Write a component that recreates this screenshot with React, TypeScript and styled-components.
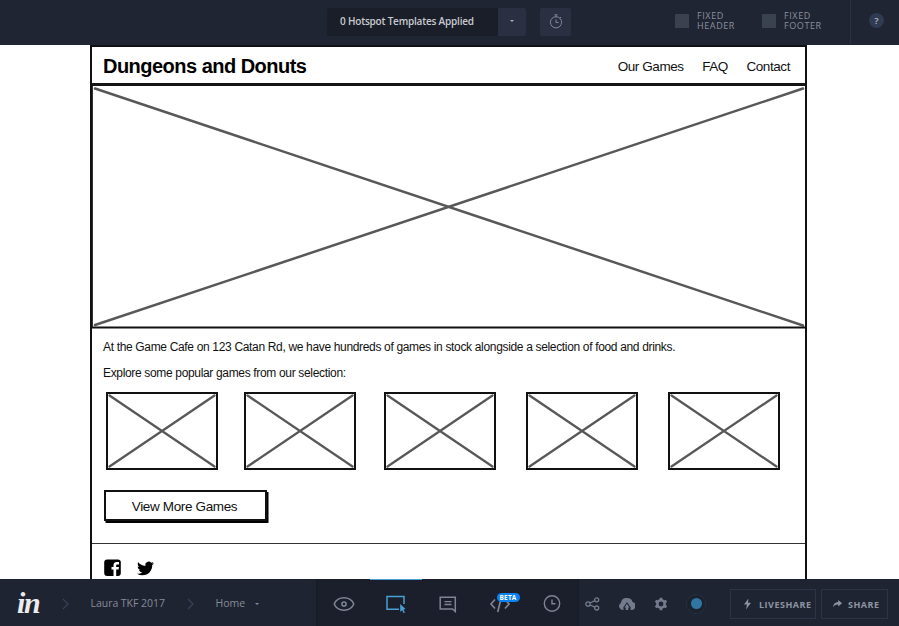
import React from "react";
import styled, { createGlobalStyle } from "styled-components";

const GlobalStyle = createGlobalStyle`
  * { box-sizing: border-box; }
  html, body { margin: 0; padding: 0; background: #fff; }
  body { overflow: hidden; }
`;

const App = styled.div`
  width: 899px;
  height: 626px;
  display: grid;
  grid-template-rows: 45px 534px 47px;
  overflow: hidden;
  background: #fff;
  font-family: "Open Sans", "Noto Sans", sans-serif;
`;

/* ---------- top toolbar ---------- */

const TopBar = styled.header`
  display: flex;
  align-items: flex-start;
  background: #1f2533;
  padding-left: 327px;
`;

const TemplateSelect = styled.div`
  display: flex;
  width: 199px;
  height: 28px;
  margin-top: 8px;
  border-radius: 2px;
  overflow: hidden;
  background: #1a1e29;
`;

const TemplateLabel = styled.span`
  width: 171px;
  padding-left: 13px;
  line-height: 27px;
  font-size: 10px;
  font-weight: 600;
  letter-spacing: -0.2px;
  color: #c9cbcf;
  white-space: nowrap;
`;

const SelectToggle = styled.div`
  width: 28px;
  display: flex;
  align-items: center;
  justify-content: center;
  padding-bottom: 2px;
  background: #2a3042;
`;

const TimerButton = styled.div`
  width: 31px;
  height: 28px;
  margin: 8px 0 0 14px;
  padding-bottom: 1px;
  display: flex;
  align-items: center;
  justify-content: center;
  border-radius: 2px;
  background: #2a3042;
`;

const FixedOption = styled.label<{ $left: number }>`
  display: flex;
  margin: 11px 0 0 ${(p) => p.$left}px;
  width: 62px;
  gap: 8px;
  font-size: 9px;
  line-height: 10px;
  letter-spacing: 0.6px;
  color: #8b909c;
`;

const CheckSquare = styled.span`
  flex: none;
  width: 14px;
  height: 14px;
  margin-top: 3px;
  background: #3a424f;
`;

const HelpArea = styled.div`
  width: 49px;
  height: 45px;
  margin-left: auto;
  padding: 13px 0 0 18px;
  border-left: 1px solid #2a3040;
`;

const HelpBadge = styled.div`
  width: 15px;
  height: 15px;
  border-radius: 50%;
  background: #303a52;
  color: #b4bac6;
  text-align: center;
  font-size: 9.5px;
  font-weight: 600;
  line-height: 15px;
`;

/* ---------- wireframe ---------- */

const Page = styled.main`
  width: 717px;
  height: 534px;
  margin-left: 90px;
  border: solid #111;
  border-width: 2px 2px 0;
  font-family: "Liberation Sans", Arial, sans-serif;
  color: #111;
  overflow: hidden;
`;

const SiteHeader = styled.div`
  height: 39px;
  display: flex;
  justify-content: space-between;
  padding: 0 15px 0 11px;
  border-bottom: 3px solid #151515;
`;

const SiteTitle = styled.h1`
  margin: 0;
  font-size: 20px;
  line-height: 39px;
  letter-spacing: -0.52px;
  color: #000;
  white-space: nowrap;
`;

const SiteNav = styled.nav`
  display: flex;
  gap: 18.5px;
  font-size: 13.5px;
  letter-spacing: -0.42px;
  line-height: 39px;
  white-space: nowrap;
`;

const CrossBox = styled.svg`
  display: block;
  flex: none;
`;

const Copy = styled.div`
  padding: 5px 0 0 11px;
  font-size: 12px;
  letter-spacing: -0.335px;
  line-height: 26px;
  white-space: nowrap;
`;

const CopyLine = styled.p`
  margin: 0;
`;

const Gallery = styled.div`
  display: grid;
  grid-template-columns: 138px 140.5px 142px 142px 112px;
  padding: 6px 0 0 13.5px;
`;

const MoreButton = styled.div`
  width: 163px;
  height: 31px;
  margin: 20px 0 0 12px;
  border: 2px solid #111;
  box-shadow: 1.5px 2px 0 #000;
  text-align: center;
  font-size: 13.5px;
  letter-spacing: -0.35px;
  line-height: 30px;
  padding-right: 2px;
`;

const SiteFooter = styled.div`
  height: 40px;
  margin-top: 22px;
  padding: 15px 0 0 12px;
  border-top: 1px solid #333;
  display: flex;
  gap: 15px;
`;

/* ---------- bottom toolbar ---------- */

const BottomBar = styled.footer`
  display: grid;
  grid-template-columns: 316px 263px 1fr;
  background: #1f2432;
  color: #868b99;
`;

const Crumbs = styled.div`
  display: flex;
  align-items: center;
  padding: 2px 0 0 17px;
  font-size: 10.5px;
  white-space: nowrap;
`;

const Crumb = styled.span<{ $width: number }>`
  width: ${(p) => p.$width}px;
  padding-bottom: 1px;
  letter-spacing: -0.04px;
`;

const CrumbArrow = styled.svg`
  flex: none;
  margin-right: 21.5px;
`;

const Logo = styled.span`
  flex: none;
  width: 45px;
  height: 36px;
  font-family: "Liberation Serif", serif;
  font-size: 30px;
  font-style: italic;
  font-weight: 700;
  line-height: 34px;
  letter-spacing: -1.4px;
  color: #ececee;
`;

const ModeTabs = styled.div`
  display: grid;
  grid-template-columns: repeat(5, 52px);
  justify-content: center;
  background: #1a1f2b;
  border: solid #171b26;
  border-width: 0 1px;
`;

const ModeTab = styled.div<{ $active?: boolean }>`
  position: relative;
  display: flex;
  align-items: center;
  justify-content: center;
  padding-top: ${(p) => (p.$active ? "1px" : "2px")};
  border-top: ${(p) => (p.$active ? "1px solid #4a9fd4" : "none")};
  color: ${(p) => (p.$active ? "#4a9fd4" : "#7f8593")};
`;

const BetaBadge = styled.span`
  position: absolute;
  left: 23px;
  top: 14px;
  width: 23px;
  height: 9px;
  border-radius: 5px;
  background: #0b82f0;
  color: #fff;
  font-size: 6.5px;
  font-weight: 700;
  line-height: 9px;
  text-align: center;
  letter-spacing: 0.2px;
`;

const Actions = styled.div`
  display: flex;
  align-items: center;
  padding: 2px 0 0 6px;
`;

const ActionIcon = styled.svg`
  flex: none;
  margin-right: 19px;
`;

const RecordRing = styled.div`
  flex: none;
  width: 20px;
  height: 20px;
  margin: 0 24px 0 -1px;
  display: flex;
  align-items: center;
  justify-content: center;
  border: 1px solid #253040;
  border-radius: 50%;
  background: #1b222e;
`;

const RecordDot = styled.div`
  width: 11px;
  height: 11px;
  border-radius: 50%;
  background: #2f76a5;
`;

const OutlineButton = styled.div<{ $width: number }>`
  flex: none;
  width: ${(p) => p.$width}px;
  height: 30px;
  margin-right: 5px;
  padding: 1px 0 0 11px;
  display: flex;
  align-items: center;
  gap: 6px;
  border: 1px solid #2d3448;
  font-size: 9px;
  font-weight: 700;
  letter-spacing: 0.5px;
  color: #8e94a2;
  white-space: nowrap;
`;

function Crossed({ width, height, inset }: { width: number; height: number; inset: number }) {
  return (
    <CrossBox width={width} height={height}>
      <path
        d={`M${inset} ${inset}L${width - inset} ${height - inset}M${width - inset} ${inset}L${inset} ${height - inset}`}
        stroke="#58585a"
        strokeWidth="2.3"
        strokeLinecap="round"
      />
      <rect x="1" y="1" width={width - 2} height={height - 2} fill="none" stroke="#111" strokeWidth="2" />
    </CrossBox>
  );
}

function Hero() {
  return (
    <CrossBox width="713" height="243">
      <path d="M3 2.500L711 239.500M711 2.500L3 239" stroke="#58585a" strokeWidth="2.500" strokeLinecap="round" />
      <path d="M.5 0V242" stroke="#333" strokeWidth="1" />
      <path d="M0 241.500H713" stroke="#111" strokeWidth="2" />
    </CrossBox>
  );
}

function Arrow() {
  return (
    <CrumbArrow width="7" height="12" viewBox="0 0 7 12" fill="none" stroke="#3b4359" strokeWidth="1.1">
      <path d="M1 1L6 6L1 11" />
    </CrumbArrow>
  );
}

const games = [0, 1, 2, 3, 4];

export default function Root() {
  return (
    <App>
      <GlobalStyle />
      <TopBar>
        <TemplateSelect>
          <TemplateLabel>0 Hotspot Templates Applied</TemplateLabel>
          <SelectToggle>
            <svg width="4" height="2" viewBox="0 0 4 2"><path d="M0 0H4L2 2Z" fill="#aab0bb" /></svg>
          </SelectToggle>
        </TemplateSelect>
        <TimerButton>
          <svg width="14" height="15" viewBox="0 0 14 15" fill="none" stroke="#828896">
            <circle cx="7" cy="8.300" r="5.600" />
            <path d="M5.500 .8H8.500M7 1V3M7 5.500V8.500H9.500M11 4L12 3" />
          </svg>
        </TimerButton>
        <FixedOption $left={104}><CheckSquare /><span>FIXED HEADER</span></FixedOption>
        <FixedOption $left={25}><CheckSquare /><span>FIXED FOOTER</span></FixedOption>
        <HelpArea><HelpBadge>?</HelpBadge></HelpArea>
      </TopBar>

      <Page>
        <SiteHeader>
          <SiteTitle>Dungeons and Donuts</SiteTitle>
          <SiteNav><span>Our Games</span><span>FAQ</span><span>Contact</span></SiteNav>
        </SiteHeader>
        <Hero />
        <Copy>
          <CopyLine>At the Game Cafe on 123 Catan Rd, we have hundreds of games in stock alongside a selection of food and drinks.</CopyLine>
          <CopyLine>Explore some popular games from our selection:</CopyLine>
        </Copy>
        <Gallery>
          {games.map((g) => <Crossed key={g} width={112} height={78} inset={3.5} />)}
        </Gallery>
        <MoreButton>View More Games</MoreButton>
        <SiteFooter>
          <svg width="18" height="18" viewBox="0 0 18 18">
            <rect x=".2" y=".5" width="16.600" height="16.500" rx="3" fill="#000" />
            <path d="M9.500 17V10.500H7.500V8H9.500V6.200C9.500 4 10.800 3 12.700 3H15V5.500H13.500C12.500 5.500 12.200 6 12.200 6.800V8H15L14.600 10.500H12.200V17Z" fill="#fff" />
          </svg>
          <svg width="17" height="19" viewBox="0 -1.5 24 27">
            <path fill="#000" d="M23.950 4.570a10 10 0 0 1-2.820.77 4.960 4.960 0 0 0 2.160-2.720c-.95.550-2 .95-3.130 1.180a4.920 4.920 0 0 0-8.380 4.480C7.690 8.090 4.070 6.130 1.640 3.160a4.820 4.820 0 0 0-.67 2.480c0 1.710.87 3.210 2.190 4.100a4.900 4.900 0 0 1-2.230-.62v.06a4.920 4.920 0 0 0 3.950 4.830 5 5 0 0 1-2.210.08 4.940 4.940 0 0 0 4.600 3.420A9.870 9.870 0 0 1 0 19.540a13.990 13.990 0 0 0 7.560 2.210c9.050 0 14-7.500 14-13.980 0-.21 0-.42-.02-.63a9.940 9.940 0 0 0 2.410-2.570z" />
          </svg>
        </SiteFooter>
      </Page>

      <BottomBar>
        <Crumbs>
          <Logo>in</Logo>
          <Arrow />
          <Crumb $width={96.5}>Laura TKF 2017</Crumb>
          <Arrow />
          <Crumb $width={39.5}>Home</Crumb>
          <svg width="4" height="2" viewBox="0 0 4 2"><path d="M0 0H4L2 2Z" fill="#868b99" /></svg>
        </Crumbs>
        <ModeTabs>
          <ModeTab>
            <svg width="22" height="16" viewBox="0 0 22 16" fill="none" stroke="currentColor" strokeWidth="1.500">
              <path d="M1.200 8C3 3.500 7 1.700 11 1.700S19 3.500 20.800 8C19 12.500 15 14.200 11 14.200S3 12.500 1.200 8Z" />
              <circle cx="11" cy="8" r="2.100" />
            </svg>
          </ModeTab>
          <ModeTab $active>
            <svg width="22" height="20" viewBox="0 0 22 20">
              <path d="M14 15.300H2V2.500H19V10" fill="none" stroke="currentColor" strokeWidth="1.500" />
              <path d="M15.200 10L20.500 15L18.500 15.500L20 18.500L18.400 19L17.300 16.300L15.200 17.700Z" fill="currentColor" />
            </svg>
          </ModeTab>
          <ModeTab>
            <svg width="18" height="18" viewBox="0 0 18 18" fill="none" stroke="currentColor" strokeWidth="1.500">
              <path d="M1.200 2.200H16.300V16.500L13.500 14H1.200Z" />
              <path d="M5.500 6.700H12.500M5.500 9.500H12.500" strokeWidth="1.300" />
            </svg>
          </ModeTab>
          <ModeTab>
            <svg width="22" height="18" viewBox="0 0 22 18" fill="none" stroke="currentColor" strokeWidth="1.700">
              <path d="M6 4.500L2 9L6 13.500M16 4.500L20 9L16 13.500M11.700 5L8.700 17" />
            </svg>
            <BetaBadge>BETA</BetaBadge>
          </ModeTab>
          <ModeTab>
            <svg width="18" height="18" viewBox="0 0 18 18" fill="none" stroke="currentColor" strokeWidth="1.400">
              <circle cx="9" cy="8.500" r="7.700" />
              <path d="M9 4.500V8.800H12.500" />
            </svg>
          </ModeTab>
        </ModeTabs>
        <Actions>
          <ActionIcon width="15" height="14" viewBox="0 0 15 14" fill="none" stroke="#747b8c" strokeWidth="1.300">
            <circle cx="3" cy="7" r="2.200" /><circle cx="11.700" cy="2.800" r="2" /><circle cx="11.700" cy="11" r="2" />
            <path d="M5 6L9.800 3.700M5 8L9.800 10.200" />
          </ActionIcon>
          <ActionIcon width="16" height="14" viewBox="0 0 16 14">
            <path d="M4.500 12.800A3.700 3.700 0 0 1 1.900 6A5.200 5.200 0 0 1 7.500 1A5.300 5.300 0 0 1 13.500 5A4 4 0 0 1 11.600 12.800L11 11.500H12.300L8 5L3.700 11.500H5Z" fill="#747b8c" />
            <path d="M8 6.700L10.500 10.500H9.300V13H6.700V10.500H5.500Z" fill="#747b8c" />
          </ActionIcon>
          <ActionIcon width="14" height="14" viewBox="0 0 14 14">
            <circle cx="7" cy="7" r="3.700" fill="none" stroke="#747b8c" strokeWidth="2.500" />
            <path d="M7 .7V3M7 11V13.300M1.500 3.800L3.600 5M10.400 9L12.500 10.200M1.500 10.200L3.600 9M10.400 5L12.500 3.800" stroke="#747b8c" strokeWidth="2.700" />
          </ActionIcon>
          <RecordRing><RecordDot /></RecordRing>
          <OutlineButton $width={86}>
            <svg width="11" height="12" viewBox="0 0 11 12"><path d="M6.500 .5L2 6.500H5L4 11.500L9 4.800H6Z" fill="#8e94a2" /></svg>
            LIVESHARE
          </OutlineButton>
          <OutlineButton $width={67}>
            <svg width="9" height="8" viewBox="0 0 9 8"><path d="M5.200 0L9 3.200L5.200 6.500V4.600C3 4.400 1.300 5 0 7.500C.2 4 2 2 5.200 1.900Z" fill="#8e94a2" /></svg>
            SHARE
          </OutlineButton>
        </Actions>
      </BottomBar>
    </App>
  );
}
